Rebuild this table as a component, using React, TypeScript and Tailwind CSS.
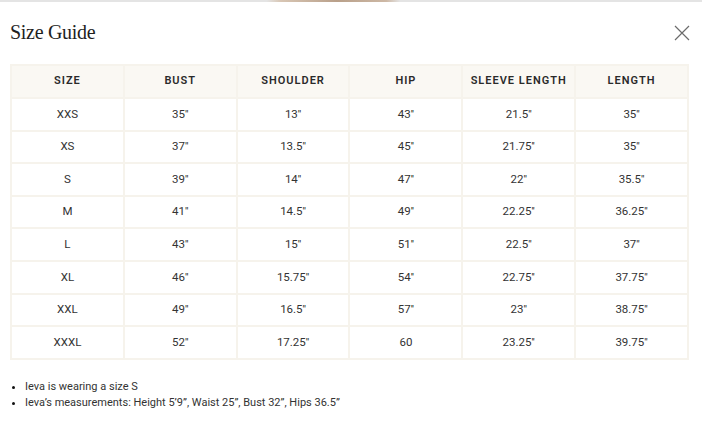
const headers = ["Size", "Bust", "Shoulder", "Hip", "Sleeve Length", "Length"];

const rows: string[][] = [
  ["XXS", "35''", "13''", "43''", "21.5''", "35''"],
  ["XS", "37''", "13.5''", "45''", "21.75''", "35''"],
  ["S", "39''", "14''", "47''", "22''", "35.5''"],
  ["M", "41''", "14.5''", "49''", "22.25''", "36.25''"],
  ["L", "43''", "15''", "51''", "22.5''", "37''"],
  ["XL", "46''", "15.75''", "54''", "22.75''", "37.75''"],
  ["XXL", "49''", "16.5''", "57''", "23''", "38.75''"],
  ["XXXL", "52''", "17.25''", "60", "23.25''", "39.75''"],
];

function CloseIcon() {
  return (
    <svg width="16" height="16" viewBox="0 0 16 16" fill="none" stroke="#6b6b6b" strokeWidth="1.2">
      <path d="M1 1 L15 15 M15 1 L1 15" />
    </svg>
  );
}

export default function App() {
  return (
    <div className="h-[426px] w-[702px] overflow-hidden bg-white font-['Roboto',sans-serif] text-[#2b2b2b]">
      <div className="h-[2px] w-full bg-[linear-gradient(90deg,#e4e4e4_0%,#e4e4e4_38%,#d8c6b4_40%,#b9a08a_48%,#cdb8a5_55%,#e4e4e4_57%,#e4e4e4_100%)]" />

      <div className="flex items-center justify-between pl-[10px] pr-[12px] pt-[16px]">
        <h2 className="font-['Liberation_Serif',serif] text-[20px] leading-[28px] tracking-[-0.3px] text-[#1f1f1f]">
          Size Guide
        </h2>
        <button aria-label="Close" className="mt-[1px] p-0">
          <CloseIcon />
        </button>
      </div>

      <div className="px-[10px] pt-[18px]">
        <table className="w-[679px] table-fixed border-collapse">
          <thead>
            <tr className="h-[33px] bg-[#faf8f3]">
              {headers.map((h) => (
                <th
                  key={h}
                  className="border-2 border-[#f6f3ec] text-center text-[11px] font-semibold uppercase tracking-[1px] text-[#2a2a2a]"
                >
                  {h}
                </th>
              ))}
            </tr>
          </thead>
          <tbody>
            {rows.map((r) => (
              <tr key={r[0]} className="h-[32.6px]">
                {r.map((c, i) => (
                  <td
                    key={i}
                    className="border-2 border-[#f6f3ec] text-center text-[11.5px] text-[#333]"
                  >
                    {c}
                  </td>
                ))}
              </tr>
            ))}
          </tbody>
        </table>
      </div>

      <ul className="mt-[19px] list-disc pl-[25px] text-[11px] leading-[16px] text-[#333] marker:text-[#111]">
        <li>Ieva is wearing a size S</li>
        <li>Ieva’s measurements: Height 5’9”, Waist 25”, Bust 32”, Hips 36.5”</li>
      </ul>
    </div>
  );
}
